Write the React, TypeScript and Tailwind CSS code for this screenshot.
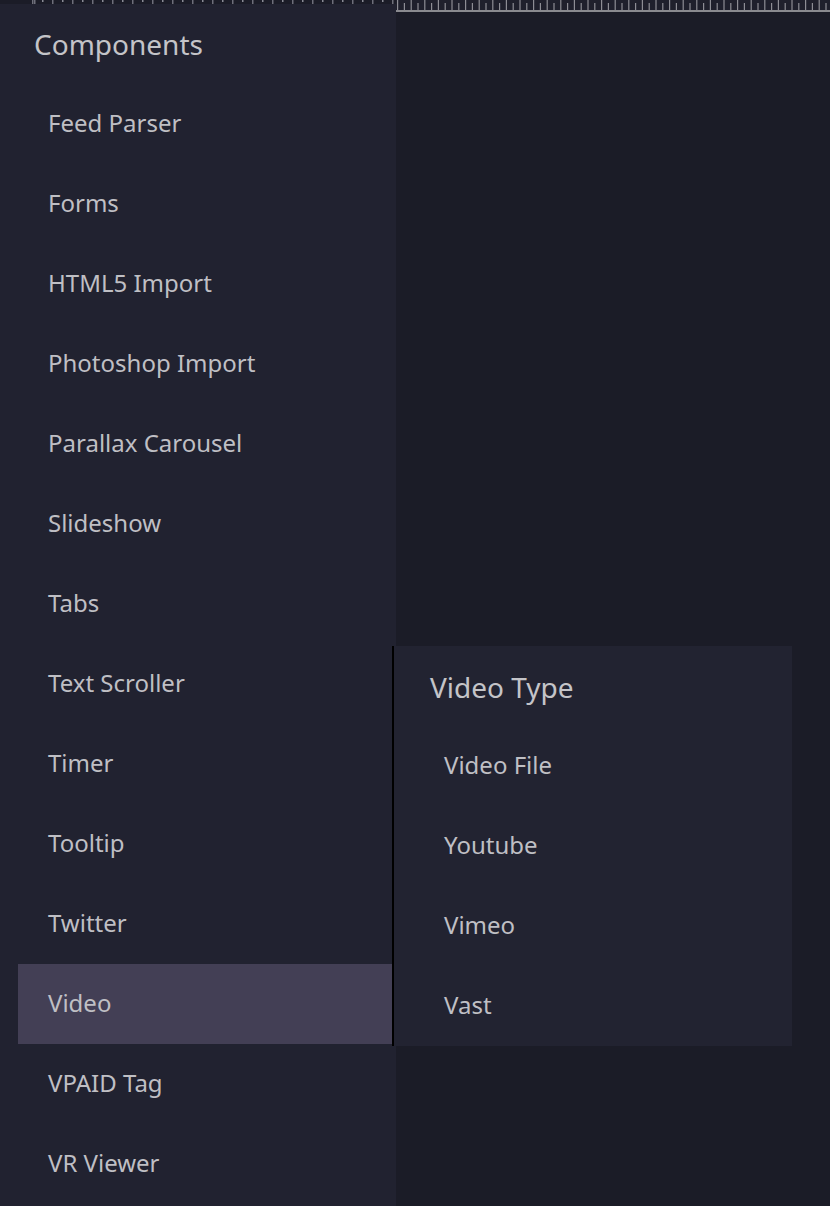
import React from "react";

const components = [
  "Feed Parser",
  "Forms",
  "HTML5 Import",
  "Photoshop Import",
  "Parallax Carousel",
  "Slideshow",
  "Tabs",
  "Text Scroller",
  "Timer",
  "Tooltip",
  "Twitter",
  "Video",
  "VPAID Tag",
  "VR Viewer",
];

const videoTypes = ["Video File", "Youtube", "Vimeo", "Vast"];

function LeftRuler() {
  const ticks = [];
  for (let i = 0; i < 37; i++) {
    const x = 32 + i * 10;
    ticks.push(
      <rect key={i} x={x} y={0} width={1.5} height={i % 2 === 0 ? 4 : 2} fill={i % 2 === 0 ? "#6e6f7a" : "#8a8b95"} />,
    );
  }
  return (
    <svg width="396" height="4" className="block">
      <rect x={34} y={0} width={1.5} height={4} fill="#6e6f7a" />
      {ticks}
    </svg>
  );
}

function TopRuler() {
  const ticks = [];
  for (let i = 0; i < 64; i++) {
    const x = 1 + i * 6.8;
    ticks.push(
      <rect key={i} x={x} y={i % 2 === 0 ? 0 : 3} width={1.2} height={i % 2 === 0 ? 10 : 7} fill="#8d8d94" />,
    );
  }
  return (
    <svg width="434" height="12" className="block">
      <rect x={0} y={0} width={434} height={10} fill="#1f202c" />
      {ticks}
      <rect x={0} y={10} width={434} height={2} fill="#8a8a8f" />
    </svg>
  );
}

function MenuItem({ label, active, }: { label: string; active?: boolean; }) {
  return (
    <div
      className={`ml-[18px] flex h-20 items-center pb-[2px] pl-[30px] text-[24px] text-[#bfbfc4] ${active ? "bg-[#433f55]" : ""}`}
    >
      {label}
    </div>
  );
}

export default function App() {
  return (
    <div
      className="relative h-[1206px] w-[830px] overflow-hidden bg-[#1b1c27]"
      style={{ fontFamily: "'Noto Sans', 'Open Sans', sans-serif", }}
    >
      <div className="flex">
        <div className="flex w-[396px] flex-col">
          <div className="h-[4px] bg-[#1b1c27]">
            <LeftRuler />
          </div>
          <div className="flex h-[1202px] flex-col bg-[#212230]">
            <div className="flex h-[80px] items-center pl-[34px] text-[28px] text-[#c4c4c8]">
              Components
            </div>
            <div className="mr-[4px] flex flex-col">
              {components.map((c) => <MenuItem key={c} label={c} active={c === "Video"} />)}
            </div>
          </div>
        </div>
        <div className="flex-1">
          <TopRuler />
        </div>
      </div>

      <div className="absolute left-[392px] top-[646px] flex h-[400px] w-[400px] flex-col border-l-2 border-black bg-[#222331]">
        <div className="flex h-[79px] items-center pl-[36px] pt-[3px] text-[28px] text-[#c4c4c8]">
          Video Type
        </div>
        <div className="flex flex-col">
          {videoTypes.map((t) => (
            <div key={t} className="flex h-20 items-center pl-[50px] text-[24px] text-[#bfbfc4]">
              {t}
            </div>
          ))}
        </div>
      </div>
    </div>
  );
}
